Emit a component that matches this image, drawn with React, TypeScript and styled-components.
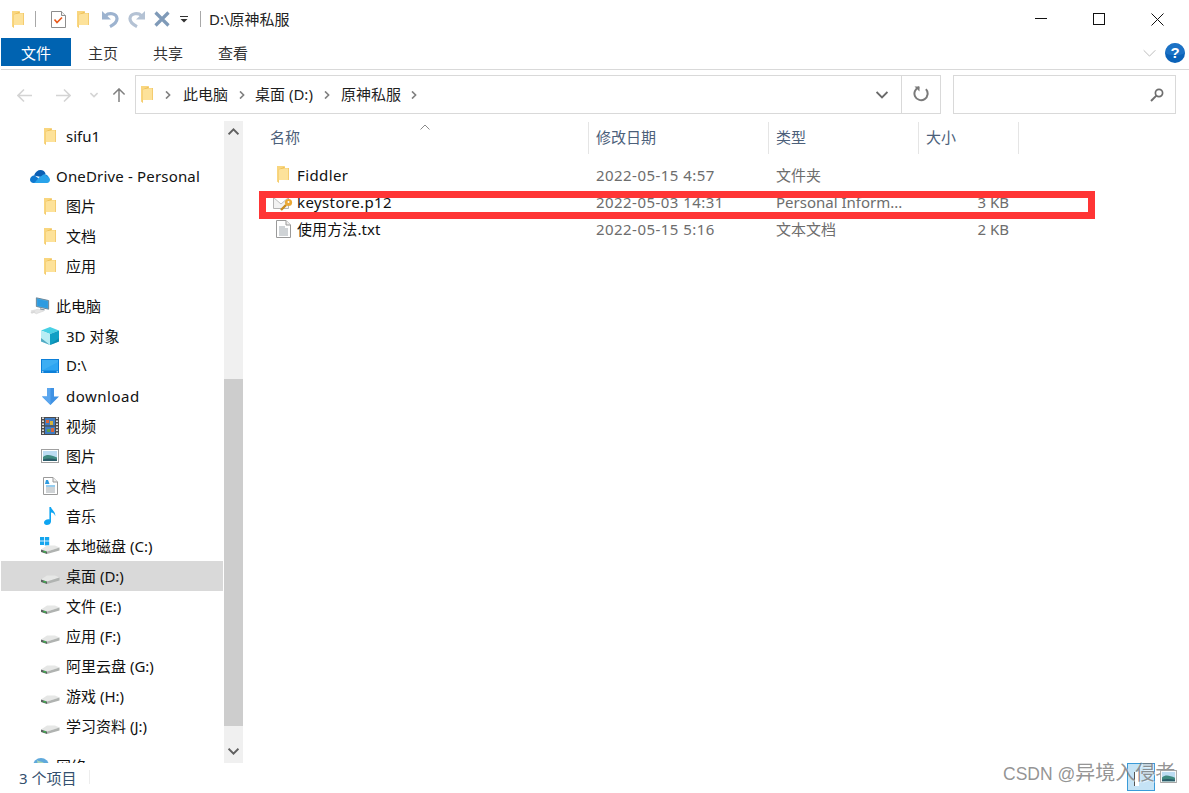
import React from "react";
import styled, { createGlobalStyle } from "styled-components";

const Global = createGlobalStyle`
  html, body { margin: 0; padding: 0; background: #fff; overflow: hidden; }
  * { box-sizing: border-box; }
`;

const FONT = `"Noto Sans", "Noto Sans CJK SC", sans-serif`;

const Window = styled.div`
  width: 1189px;
  height: 793px;
  display: flex;
  flex-direction: column;
  position: relative;
  overflow: hidden;
  background: #fff;
  font-family: ${FONT};
  font-size: 15px;
  color: #111;
`;

const TitleBar = styled.div`
  height: 38px;
  flex: none;
  display: flex;
  align-items: center;
  padding-left: 12px;
`;
const QuickIcon = styled.span<{ $gap: number }>`
  display: flex;
  align-items: center;
  flex: none;
  margin-right: ${(p) => p.$gap}px;
`;
const TitleSep = styled.span<{ $gap: number }>`
  width: 1px;
  height: 16px;
  background: #a8a8a8;
  flex: none;
  margin-right: ${(p) => p.$gap}px;
`;
const TitleText = styled.span`
  font-size: 15px;
  line-height: 38px;
  color: #222;
`;
const WinControls = styled.div`
  margin-left: auto;
  display: flex;
  height: 38px;
  padding-right: 2px;
`;
const WinButton = styled.span`
  width: 58.5px;
  display: flex;
  align-items: center;
  justify-content: center;
`;

const TabBar = styled.div`
  height: 32px;
  flex: none;
  display: flex;
  align-items: flex-start;
  border-bottom: 1px solid #d9d9d9;
  margin-left: 1px;
`;
const FileTab = styled.div`
  width: 70px;
  height: 28px;
  margin-right: 17px;
  background: #0063b1;
  color: #fff;
  display: flex;
  align-items: center;
  justify-content: center;
`;
const Tab = styled.div`
  width: 30px;
  height: 28px;
  margin-right: 35px;
  display: flex;
  align-items: center;
  justify-content: center;
  white-space: nowrap;
  color: #333;
`;
const RibbonRight = styled.div`
  margin-left: auto;
  display: flex;
  align-items: center;
  height: 30px;
  gap: 9px;
  padding-right: 4px;
`;

const NavRow = styled.div`
  height: 51px;
  flex: none;
  display: flex;
  align-items: flex-start;
  padding-top: 5px;
`;
const NavButtons = styled.div`
  width: 135px;
  height: 38px;
  flex: none;
  display: flex;
  align-items: center;
  padding: 2px 0 0 17px;
`;
const NavIcon = styled.span<{ $gap: number }>`
  display: flex;
  margin-right: ${(p) => p.$gap}px;
`;
const AddressBox = styled.div`
  width: 806px;
  height: 39px;
  flex: none;
  border: 1px solid #d9d9d9;
  display: flex;
  align-items: center;
  padding-left: 5px;
  padding-bottom: 1px;
`;
const Crumb = styled.span`
  color: #1f1f1f;
  white-space: nowrap;
  margin-bottom: 2px;
`;
const CrumbSep = styled.span<{ $w: number }>`
  display: flex;
  width: ${(p) => p.$w}px;
  justify-content: center;
  flex: none;
  padding-top: 1px;
`;
const AddressEnd = styled.div`
  margin-left: auto;
  height: 37px;
  display: flex;
  align-items: center;
`;
const AddrDrop = styled.span`
  width: 39px;
  display: flex;
  justify-content: center;
  padding-top: 2px;
`;
const Refresh = styled.span`
  width: 39px;
  height: 37px;
  border-left: 1px solid #d9d9d9;
  display: flex;
  align-items: center;
  justify-content: center;
`;
const SearchBox = styled.div`
  width: 223px;
  height: 39px;
  margin-left: 12px;
  flex: none;
  border: 1px solid #d9d9d9;
  display: flex;
  align-items: center;
  justify-content: flex-end;
  padding-right: 11px;
`;

const Body = styled.div`
  height: 642px;
  flex: none;
  display: flex;
`;
const Sidebar = styled.div`
  width: 224px;
  flex: none;
  overflow: hidden;
  padding: 0 1px;
`;
const NavItem = styled.div<{ $group?: boolean; $selected?: boolean; $spaced?: boolean; $track?: number }>`
  height: 30px;
  display: flex;
  align-items: center;
  white-space: nowrap;
  margin-top: ${(p) => (p.$spaced ? 10 : 0)}px;
  padding-left: ${(p) => (p.$group ? 29 : 39)}px;
  letter-spacing: ${(p) => p.$track ?? 0}px;
  background: ${(p) => (p.$selected ? "#d9d9d9" : "transparent")};
  color: #111;
`;
const NavLabel = styled.span<{ $lift: boolean }>`
  margin-bottom: ${(p) => (p.$lift ? 2 : 0)}px;
`;
const NavIconSlot = styled.span`
  width: 20px;
  height: 20px;
  margin-right: 6px;
  flex: none;
  display: flex;
  align-items: center;
  justify-content: center;
`;
const Scrollbar = styled.div`
  width: 19px;
  flex: none;
  background: #f0f0f0;
  display: flex;
  flex-direction: column;
`;
const ScrollBtn = styled.div<{ $up?: boolean }>`
  height: 24px;
  flex: none;
  display: flex;
  align-items: center;
  justify-content: center;
  padding-bottom: ${(p) => (p.$up ? 3 : 0)}px;
`;
const ScrollTrack = styled.div`
  flex: 1;
  display: flex;
  flex-direction: column;
`;
const ScrollThumb = styled.div`
  height: 347px;
  margin-top: 234px;
  background: #cdcdcd;
`;

const Files = styled.div`
  flex: 1;
  position: relative;
  padding-left: 27px;
  padding-top: 1px;
`;
const HeaderRow = styled.div`
  height: 32px;
  display: flex;
  position: relative;
`;
const HeaderCell = styled.div<{ $w: number; $pad: number }>`
  width: ${(p) => p.$w}px;
  flex: none;
  padding-left: ${(p) => p.$pad}px;
  border-right: 1px solid #e5e5e5;
  color: #4c607a;
  line-height: 30px;
`;
const SortMark = styled.span`
  position: absolute;
  left: 150px;
  top: 0;
  display: flex;
`;
const FileList = styled.div`
  padding-top: 7px;
`;
const FileRow = styled.div`
  height: 27px;
  display: flex;
  align-items: center;
  white-space: nowrap;
`;
const NameCell = styled.div<{ $track: number }>`
  width: 318px;
  flex: none;
  display: flex;
  align-items: center;
  padding-left: 3px;
  color: #111;
  letter-spacing: ${(p) => p.$track}px;
`;
const FileIconSlot = styled.span`
  width: 20px;
  height: 20px;
  flex: none;
  margin-right: 4px;
  display: flex;
  align-items: center;
  justify-content: center;
`;
const DateCell = styled.div`
  width: 180px;
  flex: none;
  padding-left: 8px;
  color: #6d6d6d;
  letter-spacing: 0.45px;
`;
const TypeCell = styled.div`
  width: 150px;
  flex: none;
  padding-left: 8px;
  color: #6d6d6d;
`;
const SizeCell = styled.div`
  width: 91px;
  flex: none;
  text-align: right;
  color: #6d6d6d;
`;
const RedMark = styled.div`
  position: absolute;
  left: 259px;
  top: 191px;
  width: 836px;
  height: 28px;
  border: 7px solid #ff3535;
  pointer-events: none;
`;

const StatusBar = styled.div`
  flex: 1;
  display: flex;
  align-items: center;
  padding: 0 0 2px 19px;
  color: #34506e;
  font-size: 15px;
`;
const StatusSep = styled.span`
  width: 1px;
  height: 14px;
  background: #ededed;
  margin-left: 13px;
`;
const Watermark = styled.div`
  position: absolute;
  left: 1003px;
  top: 761px;
  font-size: 17.5px;
  line-height: 25px;
  color: rgba(120, 120, 120, 0.8);
  text-shadow: 1px 1px 0 rgba(255, 255, 255, 0.5);
  white-space: nowrap;
  font-family: "Liberation Sans", "Noto Sans CJK SC", sans-serif;
`;
const WatermarkCjk = styled.span`
  font-size: 20px;
`;
const Floater = styled.div`
  position: absolute;
  left: 1127px;
  top: 763px;
  width: 28px;
  height: 28px;
  background: #c5e3f5;
  border: 1px solid #3a9bd8;
`;
const FloaterStrip = styled.span`
  position: absolute;
  left: 6px;
  top: 8px;
  width: 5px;
  height: 14px;
  background: #fff;
  border-left: 1px solid #555;
`;
const FloaterThumb = styled.span`
  position: absolute;
  left: 1160px;
  top: 770px;
  display: flex;
`;

/* ---------- icons ---------- */
const Folder = ({ w = 12, h = 17 }: { w?: number; h?: number }) => (
  <svg width={w} height={h} viewBox="0 0 12 17">
    <path d="M0 0H7.4L8 2H12V14H2V17L0 15Z" fill="#eebf55" />
    <path d="M1.6 3.4L8 2.2H11.4V14H1.6Z" fill="#fde29a" />
    <path d="M0 0V15L1.6 17V3.4L7.5 .8V0Z" fill="#f9d67f" />
  </svg>
);
const DocCheck = () => (
  <svg width="15" height="17" viewBox="0 0 15 17">
    <path d="M.5.5H10.5L14.5 4.5V16.5H.5Z" fill="#fff" stroke="#8d8d8d" />
    <path d="M10.5.5V4.5H14.5" fill="#f0f0f0" stroke="#8d8d8d" />
    <path d="M3.5 8.5L6 11.5L11 6.5" fill="none" stroke="#e8591c" strokeWidth="1.7" />
  </svg>
);
const Undo = ({ flip, color }: { flip?: boolean; color: string }) => (
  <svg width="17" height="18" viewBox="0 0 17 18" style={flip ? { transform: "scaleX(-1)" } : undefined}>
    <path d="M0 1L9 9.6H0Z" fill={color} />
    <path d="M3.6 5.6C6.6 2.6 14.4 2.8 15 8.4C15.3 11.8 12 14.6 8 16.6" fill="none" stroke={color} strokeWidth="3.2" />
  </svg>
);
const CrossBig = () => (
  <svg width="16" height="16" viewBox="0 0 16 16">
    <path d="M1.5 1.5L14.5 14.5M14.5 1.5L1.5 14.5" stroke="#7f9ab8" strokeWidth="3.2" />
  </svg>
);
const QuickDrop = () => (
  <svg width="8" height="7" viewBox="0 0 8 7">
    <path d="M0 .5H8" stroke="#333" />
    <path d="M.5 3H7.5L4 6.6Z" fill="#333" />
  </svg>
);
const Arrow = ({ dir, color, w = 15 }: { dir: "l" | "r" | "u"; color: string; w?: number }) => {
  const rot = dir === "l" ? 180 : dir === "u" ? -90 : 0;
  return (
    <svg width={w} height={w} viewBox="0 0 15 15" style={{ transform: `rotate(${rot}deg)` }}>
      <path d="M0 7.5H14M8 1.5L14 7.5L8 13.5" fill="none" stroke={color} strokeWidth="1.6" />
    </svg>
  );
};
const Chevron = ({
  dir,
  color,
  w = 8,
  sw = 1.6,
}: {
  dir: "d" | "r" | "u";
  color: string;
  w?: number;
  sw?: number;
}) => {
  const rot = dir === "r" ? -90 : dir === "u" ? 180 : 0;
  return (
    <svg width={w} height={w} viewBox="0 0 10 10" style={{ transform: `rotate(${rot}deg)` }}>
      <path d="M.5 2.5L5 7L9.5 2.5" fill="none" stroke={color} strokeWidth={sw * (10 / w)} />
    </svg>
  );
};
const RefreshIcon = () => (
  <svg width="16" height="16" viewBox="0 0 16 16">
    <path d="M4.5 1.9A6.6 6.6 0 1 0 11.5 2" transform="rotate(15 8 8)" fill="none" stroke="#7a7a7a" strokeWidth="2" />
    <path d="M1.5 0.5H6.5V5.5Z" fill="#7a7a7a" />
  </svg>
);
const SearchIcon = () => (
  <svg width="14" height="14" viewBox="0 0 14 14">
    <circle cx="9" cy="5" r="3.6" fill="none" stroke="#6e6e6e" strokeWidth="1.7" />
    <path d="M6.4 7.6L1 13" stroke="#6e6e6e" strokeWidth="2" />
  </svg>
);
const Help = () => (
  <svg width="20" height="20" viewBox="0 0 20 20">
    <circle cx="10" cy="10" r="10" fill="#0a62b8" />
    <path d="M0 10a10 10 0 0 1 20 0c-5 3-15 3-20 0Z" fill="#2c80d0" opacity=".55" />
    <text x="10" y="15.4" textAnchor="middle" fontFamily="Liberation Sans, sans-serif" fontWeight="700" fontSize="15" fill="#fff">
      ?
    </text>
  </svg>
);
const OneDrive = () => (
  <svg width="20" height="13" viewBox="0 0 20 13">
    <path d="M4 5.5C5 2 8 0 10.5 0C13 0 15 1.5 15.6 4L11 7L6 6Z" fill="#0a5fb4" />
    <path d="M13 4.5C15.4 3.6 18.4 5 18.6 7.6L10 9Z" fill="#1a8ad8" />
    <path d="M4.4 5.2C2 5.4 0 7.4 0 9.6C0 11.6 1.6 13 3.4 13H9L8 8Z" fill="#0f78cf" />
    <path d="M11 6.2C13 4.4 15 4 17 6.4C18.8 6.6 20 8 20 9.8C20 11.6 18.8 13 17 13H3.4C6 13 7 8 11 6.2Z" fill="#29a3ea" />
  </svg>
);
const PC = () => (
  <svg width="22" height="20" viewBox="0 0 22 20">
    <path d="M7 1L20.5 4V13.5L7 10.5Z" fill="#4fb3e8" stroke="#6a7f90" strokeWidth="1" />
    <path d="M8 2.2L19.6 4.8V12.4L8 9.8Z" fill="#2e9be0" />
    <path d="M11 12.5L16 13.5V15L11 14Z" fill="#8a98a2" />
    <path d="M1 15.5L9 13.5L15 15.5L7 18.5Z" fill="#e6e6e6" stroke="#d0d0d0" strokeWidth=".6" />
    <path d="M.5 17L5 15.6L6 16.8L2 18.4Z" fill="#d8d8d8" />
  </svg>
);
const Cube = () => (
  <svg width="18" height="18" viewBox="0 0 18 18">
    <path d="M9 0L18 3.5L9 7L0 3.5Z" fill="#48d0e4" />
    <path d="M0 3.5L9 7V18L0 14.5Z" fill="#b8edf4" />
    <path d="M18 3.5L9 7V18L18 14.5Z" fill="#0f9fc4" />
    <path d="M0 11L9 18L18 11V14.5L9 18L0 14.5Z" fill="#0c7fa3" opacity=".6" />
  </svg>
);
const Screen = () => (
  <svg width="18" height="14" viewBox="0 0 18 14">
    <rect x="0" y="0" width="18" height="14" fill="#0c7fd8" />
    <rect x="1" y="1" width="16" height="10.5" fill="#2ea5f2" />
    <path d="M1 11.5L17 3V1H1Z" fill="#55bbf6" opacity=".4" />
    <rect x="1" y="12.4" width="1.4" height="1" fill="#fff" />
    <rect x="15.6" y="12.4" width="1.4" height="1" fill="#fff" />
  </svg>
);
const Down = () => (
  <svg width="17" height="17" viewBox="0 0 17 17">
    <path d="M5 0H12V8.5H17L8.5 17L0 8.5H5Z" fill="#3f92e4" />
    <path d="M5 0H8.5V17L0 8.5H5Z" fill="#5ba6ee" />
  </svg>
);
const Film = () => (
  <svg width="18" height="18" viewBox="0 0 18 18">
    <rect width="18" height="18" fill="#4a4a4a" />
    <rect x="4" y="1" width="10" height="7.4" fill="#3f7cc4" />
    <rect x="4" y="9.6" width="10" height="7.4" fill="#3f7cc4" />
    <rect x="5" y="3" width="3" height="3" fill="#d8663a" />
    <rect x="9" y="4" width="3" height="4" fill="#d5b23c" />
    <rect x="6" y="12" width="3" height="3" fill="#5aa04e" />
    <rect x="10" y="11" width="3" height="4" fill="#d8663a" />
    {[1, 4, 7, 10, 13, 16].map((y) => (
      <g key={y}>
        <rect x="1" y={y - 0.5} width="2" height="1.4" fill="#eee" />
        <rect x="15" y={y - 0.5} width="2" height="1.4" fill="#eee" />
      </g>
    ))}
  </svg>
);
const Photo = ({ w = 18, h = 14 }: { w?: number; h?: number }) => (
  <svg width={w} height={h} viewBox="0 0 18 14">
    <rect x=".5" y=".5" width="17" height="13" fill="#fff" stroke="#a0a0a0" />
    <rect x="2" y="2" width="14" height="10" fill="#bcdcf2" />
    <path d="M2 8C6 4.6 10 6 16 8.4V12H2Z" fill="#3f8a80" />
    <path d="M2 10.4C7 9 11 9.6 16 10.6V12H2Z" fill="#2b5c6a" />
  </svg>
);
const TextDoc = ({ accent }: { accent?: boolean }) => (
  <svg width="15" height="18" viewBox="0 0 15 18">
    <path d="M.5.5H10L14.5 5V17.5H.5Z" fill="#fff" stroke="#9a9a9a" />
    <path d="M10 .5V5H14.5" fill="#eee" stroke="#9a9a9a" />
    {accent && <path d="M3 3L5 3L6.5 7H2Z" fill="#2e9be0" />}
    {[8.5, 10.5, 12.5, 14.5].map((y) => (
      <rect key={y} x="3" y={y} width="9" height="1" fill={accent && y === 8.5 ? "#2e9be0" : "#9fa8ae"} />
    ))}
    {!accent && <rect x="3" y="6.5" width="6" height="1" fill="#9fa8ae" />}
  </svg>
);
const Music = () => (
  <svg width="12" height="18" viewBox="0 0 12 18">
    <path d="M5.4 0H7C7.4 3 11.8 4.4 11.2 9.2C10.8 7 9 5.8 7 5.6V14.4C7 16.6 4.8 18 2.8 18C1 18 0 17 0 15.6C0 13.6 2.4 12 5.4 12.4Z" fill="#0ea5f2" />
  </svg>
);
const DriveBase = ({ win }: { win?: boolean }) => (
  <svg width="20" height="18" viewBox="0 0 20 18">
    {win && (
      <g fill="#14a5ee">
        <rect x="0" y="0" width="4" height="3.6" />
        <rect x="4.8" y="-.4" width="4.4" height="4" />
        <rect x="0" y="4.4" width="4" height="3.6" />
        <rect x="4.8" y="4.4" width="4.4" height="4" />
      </g>
    )}
    <path d="M1 12.5L7 8.5H15L19.5 10.6L7 14.5Z" fill="#e6e7e6" />
    <path d="M1 12.5L7 14.5V17L1 15Z" fill="#5c6360" />
    <path d="M7 14.5L19.5 10.6V13.4L7 17Z" fill="#b0b3b1" />
    <rect x="3.4" y="14.2" width="2.6" height="1.3" fill="#3cc04e" />
  </svg>
);
const KeyFile = () => (
  <svg width="20" height="18" viewBox="0 0 20 18">
    <path d="M.5 4.5H15.5V15.5H.5Z" fill="#f2f2f2" stroke="#b4b4b4" />
    <path d="M.5 4.5L8 11L15.5 4.5Z" fill="#fff" stroke="#bdbdbd" />
    <path d="M3 3L12 3" stroke="#e4a63a" strokeWidth="1" />
    <circle cx="15.5" cy="9.5" r="3.6" fill="#eba936" />
    <circle cx="15.5" cy="9" r="1" fill="#fff" />
    <path d="M13 12L8 17" stroke="#c88c20" strokeWidth="2.4" />
  </svg>
);
const Globe = () => (
  <svg width="18" height="18" viewBox="0 0 18 18">
    <circle cx="10" cy="9" r="8" fill="#5fa9dc" />
    <path d="M6 3C8 5 12 4 14 7C12 10 9 8 7 9Z" fill="#a9d6b8" />
  </svg>
);

type Nav = {
  label: string;
  icon: React.ReactNode;
  group?: boolean;
  spaced?: boolean;
  selected?: boolean;
  track?: number;
  latin?: boolean;
};

const navItems: Nav[] = [
  { label: "sifu1", icon: <Folder />, latin: true },
  { label: "OneDrive - Personal", icon: <OneDrive />, group: true, spaced: true, track: 0.17, latin: true },
  { label: "图片", icon: <Folder /> },
  { label: "文档", icon: <Folder /> },
  { label: "应用", icon: <Folder /> },
  { label: "此电脑", icon: <PC />, group: true, spaced: true },
  { label: "3D 对象", icon: <Cube /> },
  { label: "D:\\", icon: <Screen /> },
  { label: "download", icon: <Down />, track: 0.5, latin: true },
  { label: "视频", icon: <Film /> },
  { label: "图片", icon: <Photo /> },
  { label: "文档", icon: <TextDoc accent /> },
  { label: "音乐", icon: <Music /> },
  { label: "本地磁盘 (C:)", icon: <DriveBase win /> },
  { label: "桌面 (D:)", icon: <DriveBase />, selected: true },
  { label: "文件 (E:)", icon: <DriveBase /> },
  { label: "应用 (F:)", icon: <DriveBase /> },
  { label: "阿里云盘 (G:)", icon: <DriveBase /> },
  { label: "游戏 (H:)", icon: <DriveBase /> },
  { label: "学习资料 (J:)", icon: <DriveBase /> },
  { label: "网络", icon: <Globe />, group: true, spaced: true },
];

const fileRows = [
  { name: "Fiddler", icon: <Folder />, date: "2022-05-15 4:57", type: "文件夹", size: "", track: 0.4 },
  { name: "keystore.p12", icon: <KeyFile />, date: "2022-05-03 14:31", type: "Personal Inform...", size: "3 KB", track: 0.4 },
  { name: "使用方法.txt", icon: <TextDoc />, date: "2022-05-15 5:16", type: "文本文档", size: "2 KB", track: 0.1 },
];

export default function App() {
  return (
    <Window>
      <Global />
      <TitleBar>
        <QuickIcon $gap={11}><Folder /></QuickIcon>
        <TitleSep $gap={15} />
        <QuickIcon $gap={11}><DocCheck /></QuickIcon>
        <QuickIcon $gap={13}><Folder /></QuickIcon>
        <QuickIcon $gap={9}><Undo color="#9db3cf" /></QuickIcon>
        <QuickIcon $gap={9}><Undo flip color="#b4c2d4" /></QuickIcon>
        <QuickIcon $gap={10}><CrossBig /></QuickIcon>
        <QuickIcon $gap={12}><QuickDrop /></QuickIcon>
        <TitleSep $gap={8} />
        <TitleText>D:\原神私服</TitleText>
        <WinControls>
          <WinButton>
            <svg width="12" height="12" viewBox="0 0 12 12"><path d="M0 5.5H12" stroke="#111" /></svg>
          </WinButton>
          <WinButton>
            <svg width="12" height="12" viewBox="0 0 12 12"><rect x=".5" y=".5" width="11" height="11" fill="none" stroke="#111" /></svg>
          </WinButton>
          <WinButton>
            <svg width="13" height="13" viewBox="0 0 13 13"><path d="M.5.5L12.5 12.5M12.5.5L.5 12.5" stroke="#111" /></svg>
          </WinButton>
        </WinControls>
      </TitleBar>

      <TabBar>
        <FileTab>文件</FileTab>
        <Tab>主页</Tab>
        <Tab>共享</Tab>
        <Tab>查看</Tab>
        <RibbonRight>
          <Chevron dir="d" color="#bdbdbd" w={13} sw={1} />
          <Help />
        </RibbonRight>
      </TabBar>

      <NavRow>
        <NavButtons>
          <NavIcon $gap={24}><Arrow dir="l" color="#d4d4d4" /></NavIcon>
          <NavIcon $gap={19}><Arrow dir="r" color="#d4d4d4" /></NavIcon>
          <NavIcon $gap={14}><Chevron dir="d" color="#d4d4d4" /></NavIcon>
          <NavIcon $gap={0}><Arrow dir="u" color="#808080" w={14} /></NavIcon>
        </NavButtons>
        <AddressBox>
          <Folder />
          <CrumbSep $w={30}><Chevron dir="r" color="#808080" /></CrumbSep>
          <Crumb>此电脑</Crumb>
          <CrumbSep $w={27}><Chevron dir="r" color="#808080" /></CrumbSep>
          <Crumb>桌面 (D:)</Crumb>
          <CrumbSep $w={28}><Chevron dir="r" color="#808080" /></CrumbSep>
          <Crumb>原神私服</Crumb>
          <CrumbSep $w={26}><Chevron dir="r" color="#808080" /></CrumbSep>
          <AddressEnd>
            <AddrDrop><Chevron dir="d" color="#6a6a6a" w={12} sw={1.8} /></AddrDrop>
            <Refresh><RefreshIcon /></Refresh>
          </AddressEnd>
        </AddressBox>
        <SearchBox><SearchIcon /></SearchBox>
      </NavRow>

      <Body>
        <Sidebar>
          {navItems.map((n, i) => (
            <NavItem key={i} $group={n.group} $spaced={n.spaced} $selected={n.selected} $track={n.track}>
              <NavIconSlot>{n.icon}</NavIconSlot>
              <NavLabel $lift={!n.latin}>{n.label}</NavLabel>
            </NavItem>
          ))}
        </Sidebar>
        <Scrollbar>
          <ScrollBtn $up><Chevron dir="u" color="#606060" w={11} sw={2} /></ScrollBtn>
          <ScrollTrack><ScrollThumb /></ScrollTrack>
          <ScrollBtn><Chevron dir="d" color="#606060" w={11} sw={2} /></ScrollBtn>
        </Scrollbar>
        <Files>
          <HeaderRow>
            <HeaderCell $w={319} $pad={0}>名称</HeaderCell>
            <HeaderCell $w={180} $pad={7}>修改日期</HeaderCell>
            <HeaderCell $w={150} $pad={7}>类型</HeaderCell>
            <HeaderCell $w={100} $pad={7}>大小</HeaderCell>
            <SortMark><Chevron dir="u" color="#8a8a8a" w={10} sw={1} /></SortMark>
          </HeaderRow>
          <FileList>
            {fileRows.map((f) => (
              <FileRow key={f.name}>
                <NameCell $track={f.track}>
                  <FileIconSlot>{f.icon}</FileIconSlot>
                  {f.name}
                </NameCell>
                <DateCell>{f.date}</DateCell>
                <TypeCell>{f.type}</TypeCell>
                <SizeCell>{f.size}</SizeCell>
              </FileRow>
            ))}
          </FileList>
        </Files>
      </Body>

      <StatusBar>
        3 个项目
        <StatusSep />
      </StatusBar>

      <RedMark />
      <Floater><FloaterStrip /></Floater>
      <Watermark>CSDN @<WatermarkCjk>异境入侵者</WatermarkCjk></Watermark>
      <FloaterThumb><Photo w={17} h={13} /></FloaterThumb>
    </Window>
  );
}
